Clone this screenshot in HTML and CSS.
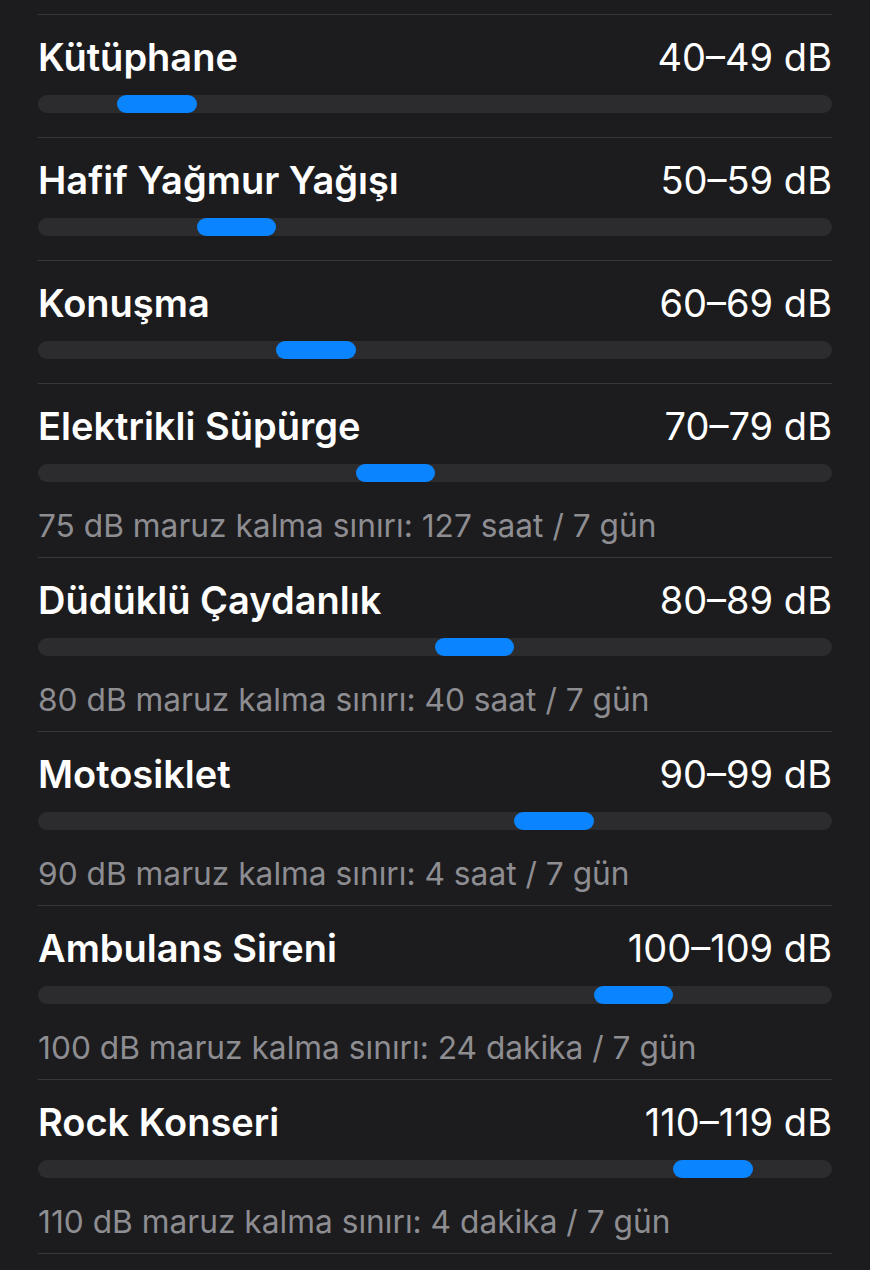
FILE: index.html
```html
<!DOCTYPE html>
<html lang="tr">
<head>
  <meta charset="UTF-8">
  <title>Gürültü Seviyeleri</title>
  <link rel="stylesheet" href="styles.css">
</head>
<body>
  <div class="list">
    <div class="row">
      <div class="head"><span class="name">Kütüphane</span><span class="level">40–49 dB</span></div>
      <div class="track"><div class="fill" style="margin-left: 10%"></div></div>
    </div>
    <div class="row">
      <div class="head"><span class="name">Hafif Yağmur Yağışı</span><span class="level">50–59 dB</span></div>
      <div class="track"><div class="fill" style="margin-left: 20%"></div></div>
    </div>
    <div class="row">
      <div class="head"><span class="name">Konuşma</span><span class="level">60–69 dB</span></div>
      <div class="track"><div class="fill" style="margin-left: 30%"></div></div>
    </div>
    <div class="row">
      <div class="head"><span class="name">Elektrikli Süpürge</span><span class="level">70–79 dB</span></div>
      <div class="track"><div class="fill" style="margin-left: 40%"></div></div>
      <p class="note">75 dB maruz kalma sınırı: 127 saat / 7 gün</p>
    </div>
    <div class="row">
      <div class="head"><span class="name">Düdüklü Çaydanlık</span><span class="level">80–89 dB</span></div>
      <div class="track"><div class="fill" style="margin-left: 50%"></div></div>
      <p class="note">80 dB maruz kalma sınırı: 40 saat / 7 gün</p>
    </div>
    <div class="row">
      <div class="head"><span class="name">Motosiklet</span><span class="level">90–99 dB</span></div>
      <div class="track"><div class="fill" style="margin-left: 60%"></div></div>
      <p class="note">90 dB maruz kalma sınırı: 4 saat / 7 gün</p>
    </div>
    <div class="row">
      <div class="head"><span class="name">Ambulans Sireni</span><span class="level">100–109 dB</span></div>
      <div class="track"><div class="fill" style="margin-left: 70%"></div></div>
      <p class="note">100 dB maruz kalma sınırı: 24 dakika / 7 gün</p>
    </div>
    <div class="row">
      <div class="head"><span class="name">Rock Konseri</span><span class="level">110–119 dB</span></div>
      <div class="track"><div class="fill" style="margin-left: 80%"></div></div>
      <p class="note">110 dB maruz kalma sınırı: 4 dakika / 7 gün</p>
    </div>
    <div class="end"></div>
  </div>
</body>
</html>
```

FILE: styles.css
```css
body {
  margin: 0;
  background-color: #1c1c1e;
  font-family: Inter, "Noto Sans", sans-serif;
  color: #fff;
}
.list {
  padding: 14px 38px 0;
}
.row {
  border-top: 1px solid #38383a;
}
.head {
  display: flex;
  justify-content: space-between;
  align-items: center;
  padding-top: 20px;
  height: 44px;
  line-height: 44px;
  font-size: 38px;
}
.name {
  font-weight: 600;
}
.level {
  font-weight: 400;
}
.track {
  display: flex;
  height: 18px;
  margin: 16px 0 24px;
  border-radius: 9px;
  background-color: #2c2c2e;
}
.fill {
  width: 10%;
  border-radius: 9px;
  background-color: #0a84ff;
}
.note {
  margin: 0 0 11px;
  line-height: 40px;
  font-size: 31.7px;
  color: #8d8d92;
}
.end {
  border-top: 1px solid #38383a;
}
```
